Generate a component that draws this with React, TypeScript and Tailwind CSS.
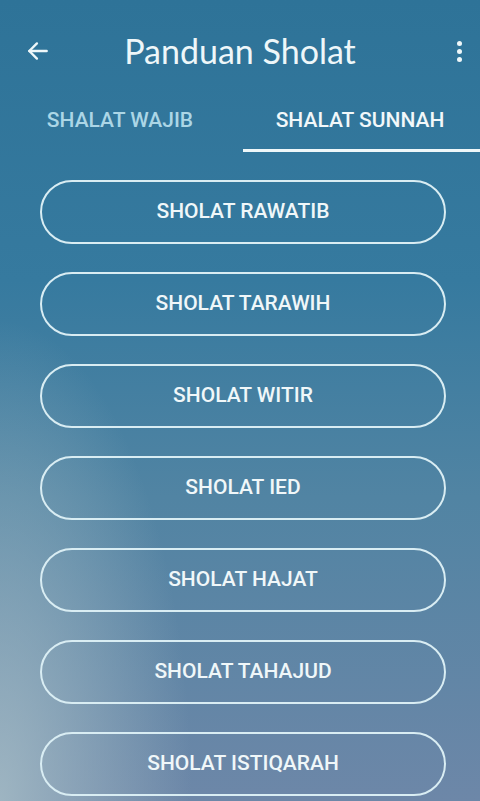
import React from "react";

const items = [
  "SHOLAT RAWATIB",
  "SHOLAT TARAWIH",
  "SHOLAT WITIR",
  "SHOLAT IED",
  "SHOLAT HAJAT",
  "SHOLAT TAHAJUD",
  "SHOLAT ISTIQARAH",
];

export default function App() {
  return (
    <div className="w-[480px] h-[801px] overflow-hidden flex flex-col bg-[radial-gradient(ellipse_40%_60%_at_0%_100%,rgba(170,192,200,0.8),rgba(170,192,200,0)),linear-gradient(to_bottom,#2e7398_0%,#367a9f_35%,#5184a3_62%,#6d87a8_100%)]">
      <div className="h-[102px] flex items-center relative">
        <div className="w-[78px] flex justify-start pl-[25px] text-[#eef7f9]">
          <svg width="26" height="26" viewBox="0 0 24 24" fill="none" stroke="currentColor" strokeWidth="2.2" strokeLinecap="round" strokeLinejoin="round">
            <path d="M20 12H4" />
            <path d="M11 5l-7 7 7 7" />
          </svg>
        </div>
        <div className="flex-1 text-center text-[34px] text-[#eef7f9] font-['Lato',sans-serif] leading-none">
          Panduan Sholat
        </div>
        <div className="w-[78px] flex justify-end pr-[18px]">
          <div className="flex flex-col gap-[3px]">
            <div className="w-[5px] h-[5px] rounded-full bg-[#eef7f9]" />
            <div className="w-[5px] h-[5px] rounded-full bg-[#eef7f9]" />
            <div className="w-[5px] h-[5px] rounded-full bg-[#eef7f9]" />
          </div>
        </div>
      </div>
      <div className="flex h-[50px] font-['Roboto',sans-serif] font-medium text-[21px]">
        <div className="w-[240px] flex flex-col">
          <div className="h-[38px] flex items-center justify-center text-[#acd6e6]">SHALAT WAJIB</div>
        </div>
        <div className="w-[240px] flex flex-col">
          <div className="h-[38px] flex items-center justify-center text-[#f2f8fa]">SHALAT SUNNAH</div>
          <div className="mt-[9px] h-[3px] ml-[3px] bg-[#eef7f9]" />
        </div>
      </div>
      <div className="flex flex-col gap-[28px] pt-[28px] pl-[40px] pr-[34px]">
        {items.map((t) => (
          <div
            key={t}
            className="h-[64px] rounded-full border-2 border-[#d9edf3] flex items-center justify-center font-['Roboto',sans-serif] font-medium text-[21px] text-[#f0f7f9]"
          >
            {t}
          </div>
        ))}
      </div>
    </div>
  );
}
